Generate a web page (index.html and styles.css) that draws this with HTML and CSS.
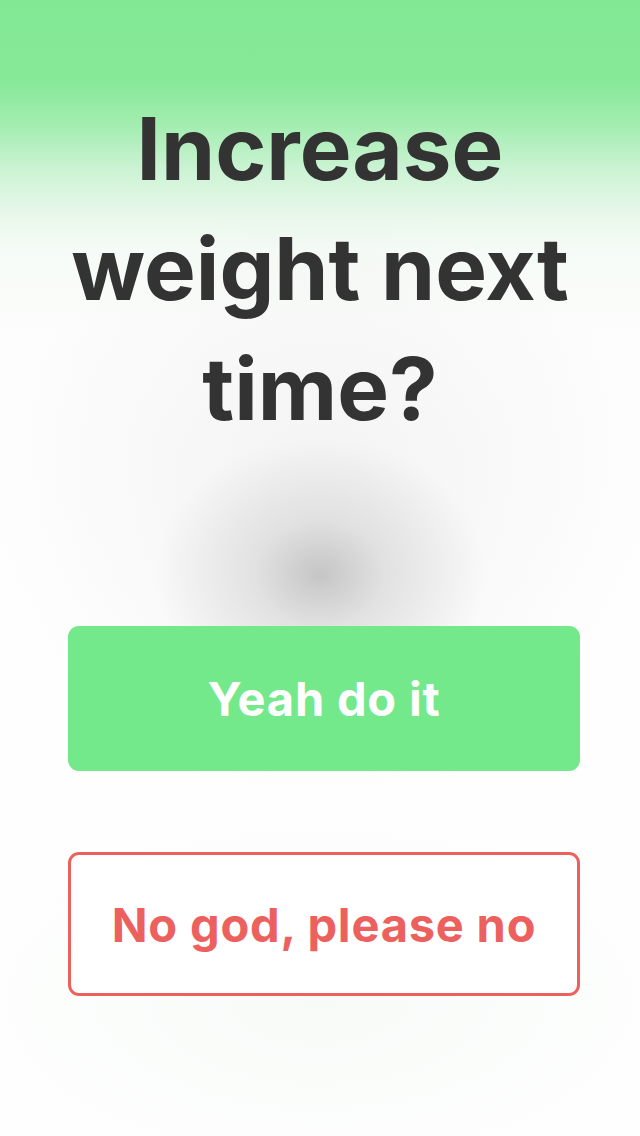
FILE: index.html
```html
<!DOCTYPE html>
<html>
<head>
<meta charset="utf-8">
<link rel="stylesheet" href="styles.css">
</head>
<body>
<div class="screen">
  <h1 class="question">Increase<br>weight next<br>time?</h1>
  <div class="actions">
    <button class="btn btn-yes">Yeah do it</button>
    <button class="btn btn-no">No god, please no</button>
  </div>
</div>
</body>
</html>
```
FILE: styles.css
```css
html, body {
  margin: 0;
  padding: 0;
}
body {
  width: 640px;
  height: 1136px;
  overflow: hidden;
  font-family: Inter, Lato, "Noto Sans", sans-serif;
}
.screen {
  width: 640px;
  height: 1136px;
  box-sizing: border-box;
  display: flex;
  flex-direction: column;
  align-items: center;
  background:
    radial-gradient(ellipse 165px 135px at 320px 574px, rgba(192,192,192,0.9), rgba(212,212,212,0.6) 40%, rgba(240,240,240,0) 100%),
    radial-gradient(ellipse 320px 300px at 320px 500px, rgba(236,236,236,0.6), rgba(245,245,245,0) 100%),
    radial-gradient(ellipse 360px 180px at 320px 1000px, rgba(245,250,246,0.8), rgba(255,255,255,0) 100%),
    linear-gradient(180deg, #82e894 0px, #86e998 80px, #a3edb0 125px, #ccf3d4 170px, #e6f7e9 210px, #f5fbf6 250px, #fbfcfb 320px, #fdfefd 600px, #fefefe 1136px);
  padding-top: 89px;
}
.question {
  margin: 0;
  font-size: 87px;
  line-height: 120px;
  font-weight: 700;
  color: #333333;
  text-align: center;
  letter-spacing: 0;
}
.actions {
  align-self: flex-start;
  margin-left: 68px;
  margin-top: 177px;
  display: flex;
  flex-direction: column;
  gap: 81px;
  width: 512px;
}
.btn {
  font-family: Inter, Lato, "Noto Sans", sans-serif;
  font-weight: 700;
  font-size: 47px;
  letter-spacing: 0.8px;
  height: 145px;
  border-radius: 11px;
  width: 100%;
  display: flex;
  align-items: center;
  justify-content: center;
  padding: 0;
  cursor: pointer;
}
.btn-yes {
  background: #73e98b;
  color: #ffffff;
  border: none;
}
.btn-no {
  background: #ffffff;
  color: #ec615e;
  border: 3px solid #ec615e;
  height: 144px;
}
```
